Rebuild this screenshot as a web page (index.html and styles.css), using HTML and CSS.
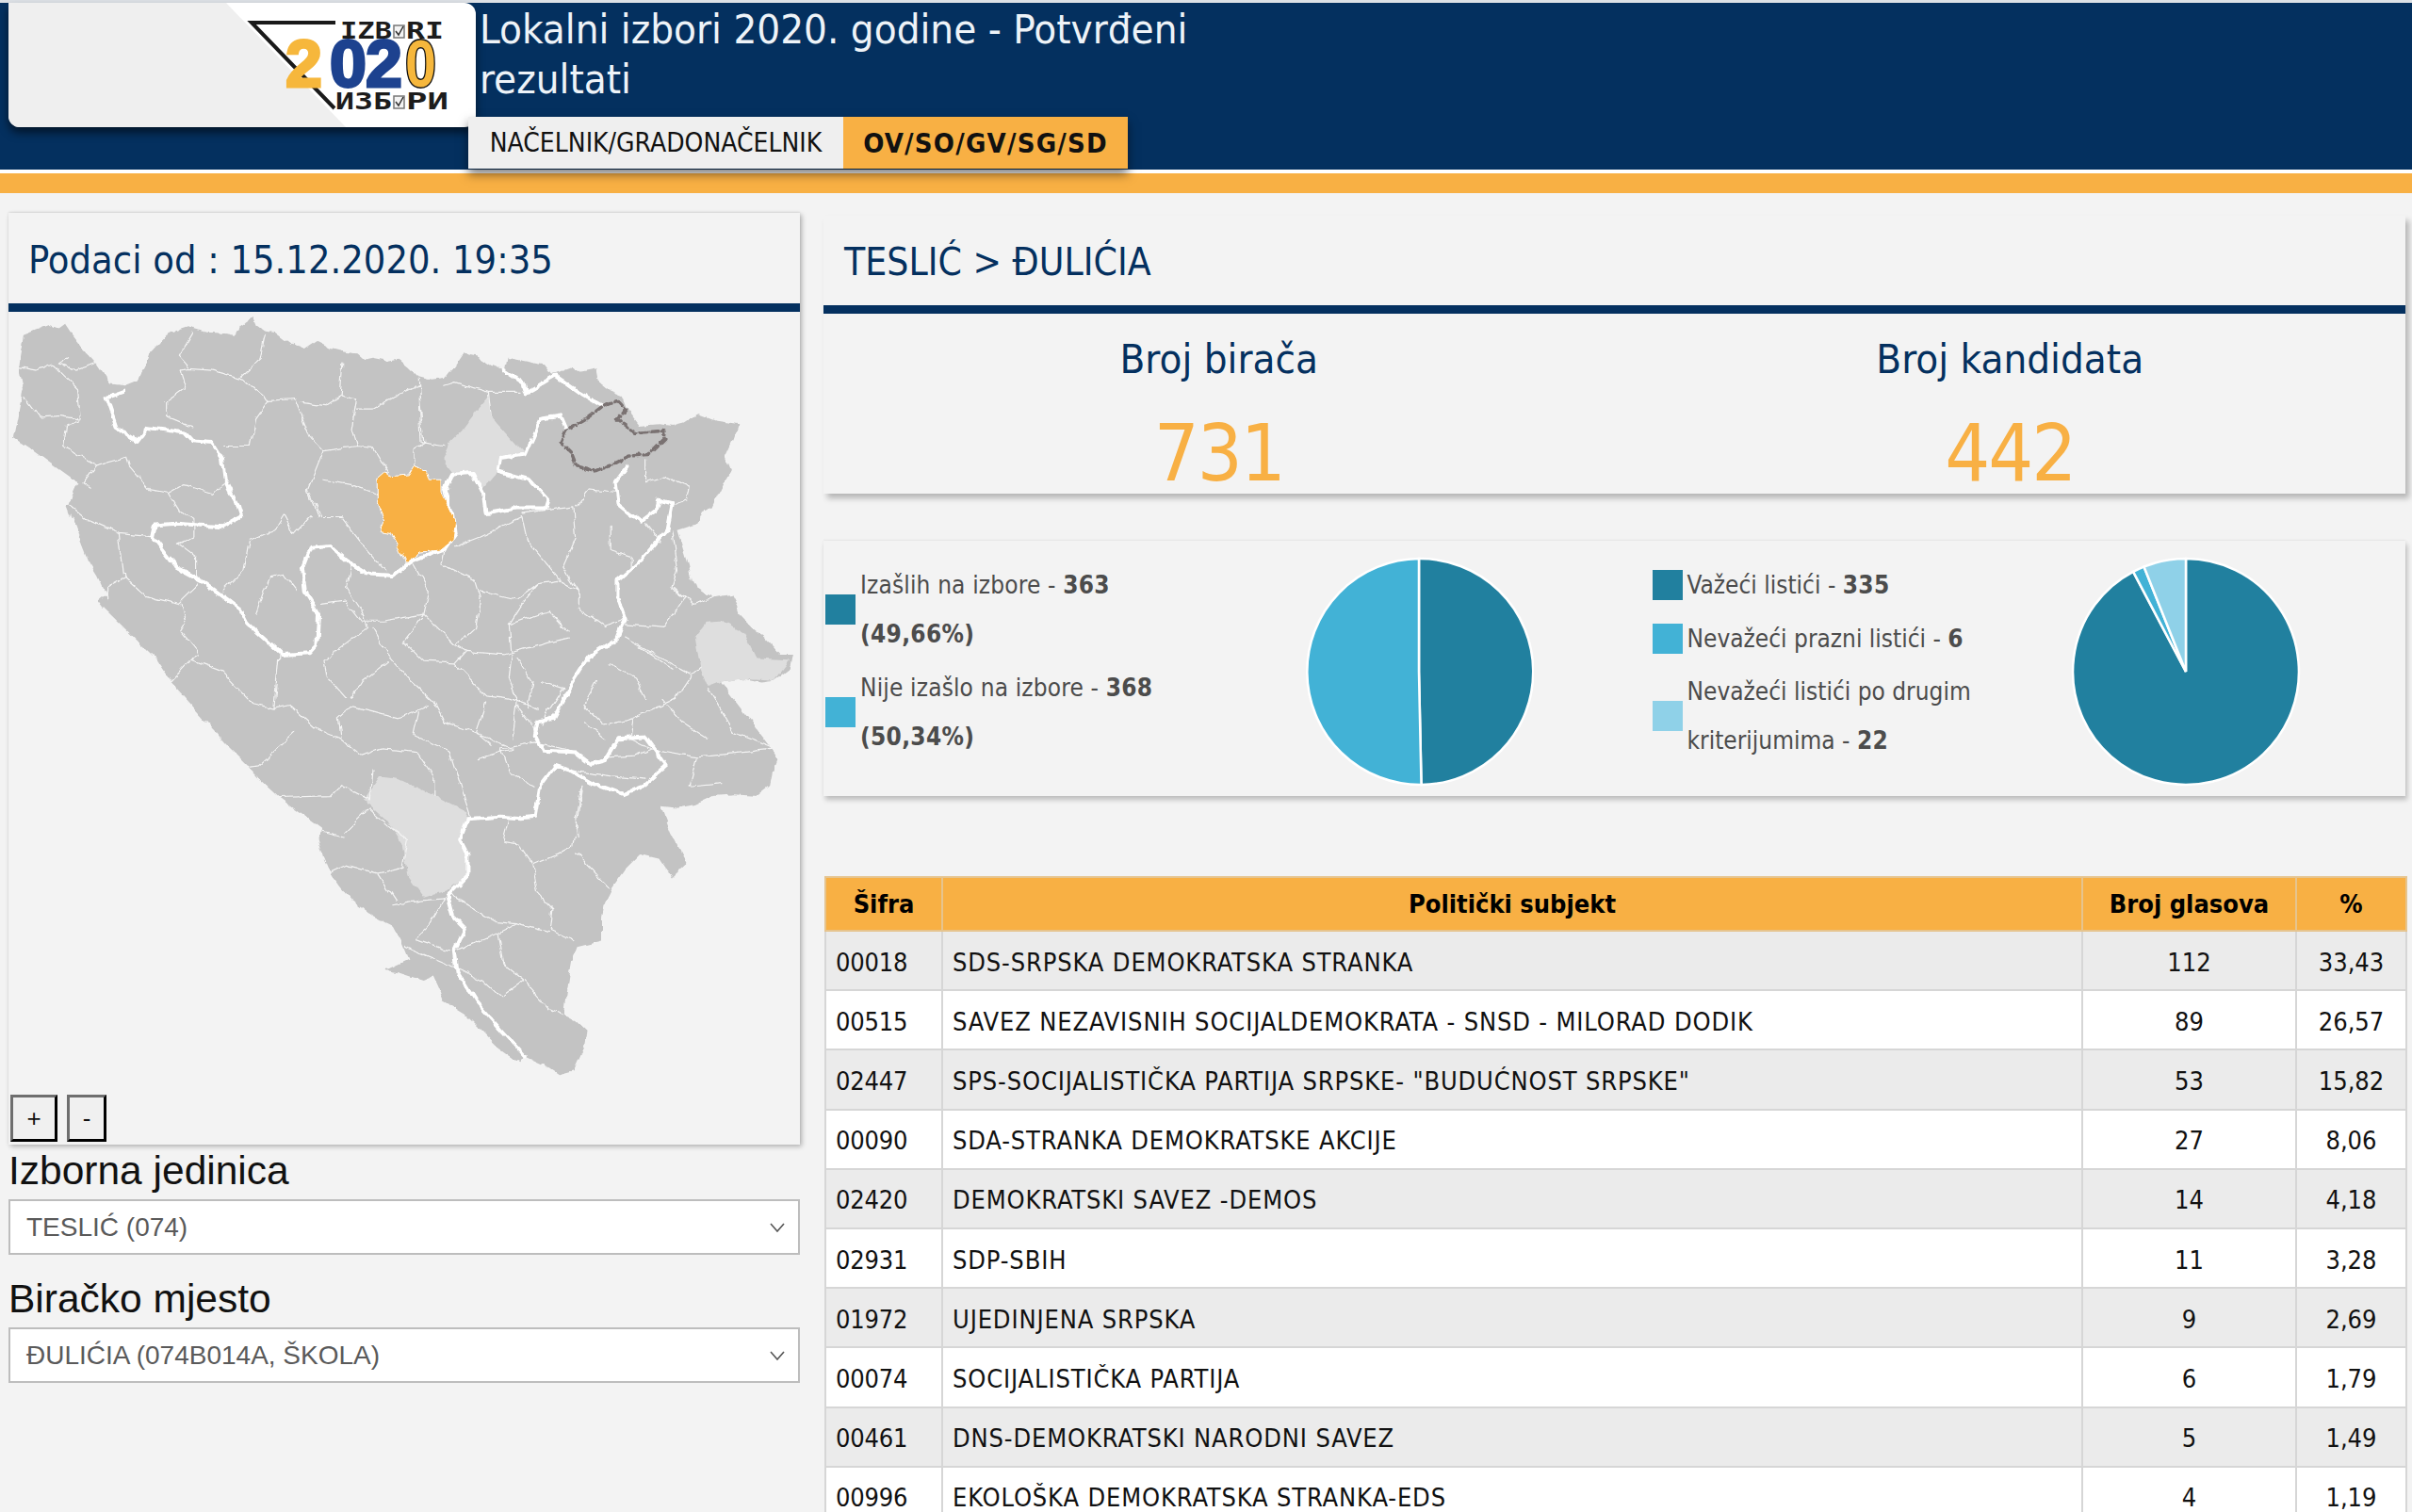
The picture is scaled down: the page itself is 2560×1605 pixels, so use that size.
FILE: index.html
```html
<!DOCTYPE html>
<html lang="bs">
<head>
<meta charset="utf-8">
<title>Lokalni izbori 2020</title>
<link rel="stylesheet" href="styles.css">
</head>
<body>
<header class="topbar">
  <div class="logo-card">
    <svg class="logo" viewBox="9 3 496 132" aria-label="Izbori 2020">
      <polygon class="logo-shade" points="9,3 240,3 367,135 9,135"/>
      <polyline class="logo-tri" points="356,24 267,24 355,115"/>
      <text class="logo-word" x="361" y="41" textLength="55" lengthAdjust="spacingAndGlyphs">IZB</text>
      <rect class="logo-box" x="418" y="27" width="11" height="13"/>
      <polyline class="logo-check" points="420,33 423,37 428,28"/>
      <text class="logo-word" x="431" y="41" textLength="40" lengthAdjust="spacingAndGlyphs">RI</text>
      <text class="logo-num gold" x="303" y="92">2</text>
      <text class="logo-num blue" x="350" y="92">0</text>
      <text class="logo-num blue" x="388" y="92">2</text>
      <text class="logo-num gold outlined" x="430" y="92" textLength="33" lengthAdjust="spacingAndGlyphs">0</text>
      <text class="logo-word" x="356" y="116" textLength="60" lengthAdjust="spacingAndGlyphs">ИЗБ</text>
      <rect class="logo-box" x="418" y="102" width="11" height="13"/>
      <polyline class="logo-check" points="420,108 423,112 428,103"/>
      <text class="logo-word" x="431" y="116" textLength="45" lengthAdjust="spacingAndGlyphs">РИ</text>
    </svg>
  </div>
  <div class="top-right">
    <h1 class="page-title">Lokalni izbori 2020. godine - Potvrđeni rezultati</h1>
    <nav class="tabs">
      <a class="tab">NAČELNIK/GRADONAČELNIK</a>
      <a class="tab tab-active">OV/SO/GV/SG/SD</a>
    </nav>
  </div>
</header>
<div class="stripe"></div>

<main class="layout">
  <aside class="left">
    <section class="map-card">
      <h2 class="card-title left-title">Podaci od : 15.12.2020. 19:35</h2>
      <svg class="map" viewBox="16 31 1532 2475" preserveAspectRatio="none" aria-label="Mapa">
        <defs>
          <filter id="rough" filterUnits="userSpaceOnUse" x="0" y="0" width="1600" height="2600" color-interpolation-filters="sRGB">
            <feTurbulence type="fractalNoise" baseFrequency="0.045 0.02" numOctaves="3" seed="7" result="noise"/>
            <feDisplacementMap in="SourceGraphic" in2="noise" scale="16" xChannelSelector="R" yChannelSelector="G"/>
          </filter>
        </defs>
        <g class="rough">
        <path class="land" d="M45 100L70 85L95 70L112 80L125 65L140 100L160 140L175 165L190 190L205 225L215 245L240 250L265 235L280 195L290 150L305 125L320 100L340 85L360 75L400 92L430 95L455 100L465 70L490 45L497 70L510 85L530 90L560 125L590 140L612 118L640 140L665 150L690 155L705 175L720 170L745 178L770 170L790 195L810 225L835 235L860 230L875 200L895 155L925 165L950 190L975 205L980 165L1015 175L1050 185L1060 205L1070 215L1105 195L1120 210L1155 200L1160 240L1180 265L1205 280L1215 320L1240 370L1275 365L1300 370L1325 360L1350 335L1385 355L1430 365L1420 410L1405 460L1415 500L1395 560L1380 610L1360 625L1350 660L1310 680L1320 730L1330 780L1340 840L1360 860L1380 880L1415 870L1425 900L1430 930L1455 970L1480 1000L1510 1050L1535 1050L1530 1090L1500 1125L1470 1130L1440 1120L1395 1130L1415 1170L1430 1200L1450 1240L1470 1280L1490 1320L1505 1360L1495 1400L1490 1440L1465 1470L1420 1465L1380 1470L1345 1495L1310 1506L1280 1500L1300 1581L1330 1669L1300 1713L1275 1656L1240 1644L1210 1690L1185 1744L1170 1790L1165 1831L1165 1900L1115 1919L1105 1960L1100 2006L1095 2060L1090 2119L1115 2140L1135 2169L1130 2219L1110 2288L1080 2300L1050 2269L1015 2244L1005 2263L960 2213L930 2165L900 2119L860 2081L850 2040L840 2006L820 2019L770 1994L745 1988L790 1956L775 1900L760 1856L720 1825L680 1781L660 1745L640 1706L625 1650L615 1594L625 1569L585 1525L540 1475L505 1425L480 1381L440 1320L400 1250L365 1190L330 1130L315 1095L300 1060L250 985L200 910L190 890L205 870L190 820L170 770L150 690L130 610L150 540L105 490L60 440L25 405L35 330L45 260L35 190L40 145Z"/>
        <path class="region-light" d="M945 285L950 340L985 400L1015 450L970 465L960 510L935 555L915 510L875 510L855 470L870 420L890 390L920 330Z"/>
        <path class="region-light" d="M1345 995L1365 955L1400 950L1440 985L1465 1060L1530 1065L1500 1125L1440 1120L1395 1130L1370 1145L1355 1090Z"/>
        <path class="region-light" d="M735 1413L770 1419L850 1475L905 1519L890 1600L905 1644L905 1706L865 1750L820 1769L790 1706L780 1619L750 1544L705 1481Z"/>
        <path class="thin" d="M35 195L70 205L100 185L130 230L150 260L155 350L130 370L125 430L185 490L160 540L175 555M130 170L115 185L145 205L185 185M45 285L75 345L115 340L150 350M185 490L245 465L250 490L290 560L325 570L355 545L410 570L440 540L455 590M325 570L345 620L375 645L375 700L345 720L380 760L380 825M130 600L170 650L230 690L295 700M230 690L240 820L205 850L205 885M240 820L280 875L345 900L385 840M350 900L360 960L350 985L385 1050L370 1065L330 1130M370 1065L430 1100L480 1180L490 1195L530 1210L540 1040M530 1210L560 1200L610 1270L660 1300L700 1350M570 1280L500 1380L480 1385M660 1300L655 1240L680 1205L720 1220L770 1240L830 1200M700 1350L740 1330L810 1340L840 1410L840 1470M320 300L360 255L350 205L365 200L410 205L470 230L520 295L495 350L485 430L435 430M320 300L320 340L375 375M365 195L345 160L370 95M465 225L505 170L515 95M520 295L570 290L600 405L625 445L595 560L615 640L660 640L680 680L700 720L745 800M580 300L630 310L660 280L665 185M660 280L690 290L680 380L690 430L625 445M690 320L720 320L760 285L810 250L820 420L800 440L800 500M690 430L720 435L750 510M810 230L815 420L860 430M860 250L880 240L945 270L1010 270M945 270L950 340M625 530L680 545L725 570M600 570L620 640M550 630L570 690L600 640M500 700L480 710L470 800L430 860M500 700L530 680L550 630M520 820L495 930M520 820L550 810L575 860M620 900L670 890L700 950L740 950L780 940L820 930L880 1020L900 1040L975 1050M680 780L670 850L700 920L710 970M800 780L830 860L820 930M860 740L855 780L920 830L930 880L920 970L885 1020M930 860L1000 885L1040 840L1080 830L1120 860M880 730L930 700L1010 640L1020 710L1085 830M1010 630L1110 610L1115 700L1090 790L1120 860L1120 910L1170 965L1205 945M1115 610L1140 560L1190 570M1180 670L1180 740L1220 760L1220 800M1250 660L1280 720M1250 470L1250 540L1290 520L1335 550L1330 590L1295 610M1300 680L1310 800L1300 850L1325 880L1285 970L1210 960M1210 1000L1280 1060L1340 1110L1355 1090M1305 850L1340 900L1380 880M1340 1110L1310 1180L1225 1240L1220 1300L1260 1330M1260 1330L1350 1355L1500 1330M1350 1355L1335 1440L1400 1430M710 970L625 1070L630 1110L670 1180M720 970L750 1050L790 1120L840 1190L860 1250L900 1270L990 1330L925 1360M750 1070L700 1130L680 1180M820 930L780 1010L820 1070L880 1075L900 1040M880 1075L940 1170L985 1180L1040 1210M985 960L990 1050L985 1120L1000 1180L990 1300M1100 1000L1020 1030L975 1050M1040 840L1010 900L985 960L1060 920L1100 980M1050 1130L1090 1150L1060 1220M1155 1130L1130 1200L1170 1260L1225 1240M1115 1340L1035 1310L970 1330L985 1400L1030 1440M810 1220L800 1290L870 1340L910 1530M1175 1355L1230 1350L1260 1330M1110 1395L1180 1410L1245 1420M1125 1440L1115 1530L1120 1590M1125 1456L1110 1619L1080 1644L1030 1675L1040 1756L1070 1806L1065 1869L1110 1900M1115 1638L1180 1744M985 1544L975 1606L1005 1613L1030 1669M870 1763L960 1844L1000 1850L1060 1875M880 1931L960 1881L1000 1850M965 1881L975 1969L1015 2019L1065 2106L1085 2119M885 1981L935 2019L970 2069L1015 2019M860 1775L830 1856L805 1894L870 1931M785 1919L880 1981M760 1794L810 1781L860 1775M635 1700L670 1675L730 1700L765 1781M665 1581L715 1506L760 1569L790 1600L780 1681L730 1700M620 1575L665 1594M530 1475L640 1469L660 1438L715 1481L720 1394M1000 1060L1030 1130L1020 1210M1060 1220L1050 1260M1240 1030L1300 1090M1180 1080L1230 1120L1250 1180M1280 1180L1320 1250L1370 1300M1370 1150L1420 1280L1500 1330M1130 1250L1170 1300M1000 1200L1030 1260L1040 1300M940 1190L920 1280L950 1320"/>
        <path class="thick" d="M240 265L205 285L225 375L265 415L285 375L355 390L370 415L410 420L430 470L435 530L455 590L465 640L430 670L340 660L300 665L295 700L340 790L395 835L465 915L480 960L545 1050L600 1045L615 1020L618 930L590 860L585 790L600 730L640 725L680 780L710 810L760 815L800 770L860 735L880 690L875 630L860 560L875 515L915 510L935 570L940 630L1000 615L1055 615L1060 590L1025 530L965 505L970 465L1015 455L1045 350L1085 340L1095 375M1215 490L1190 540L1195 600L1240 655L1270 620L1275 590L1300 600L1290 680L1240 770L1195 830L1195 880L1210 945L1195 1000L1140 1055L1105 1140L1070 1240L1040 1250L1035 1290L1050 1335L1115 1340L1145 1375L1170 1365L1195 1300L1250 1295L1290 1380L1245 1440L1205 1465L1145 1430L1105 1395L1075 1380L1045 1440L1035 1531L1005 1535L970 1531L905 1538L890 1600L905 1644L905 1706L865 1769L875 1825L900 1863L880 1931L885 1994L920 2081L1015 2244M975 205L1015 245L1020 270L1075 220L1120 270L1165 310"/>
        <path class="selected" d="M730 530L745 510L760 520L790 515L800 490L825 505L830 530L855 530L855 570L880 650L875 710L850 740L815 745L785 780L770 730L755 690L735 685L745 650L730 600Z"/>
        <path class="dashed" d="M1195 295L1210 320L1195 350L1230 390L1285 385L1285 410L1255 455L1215 460L1190 480L1150 505L1115 490L1105 450L1085 420L1095 385L1135 350L1170 310Z"/>
        </g>
      </svg>
      <div class="zoom-controls">
        <button class="zoom-btn zoom-plus">+</button>
        <button class="zoom-btn zoom-minus">-</button>
      </div>
    </section>
    <label class="field-label">Izborna jedinica</label>
    <div class="select"><span>TESLIĆ (074)</span><svg class="chevron" viewBox="0 0 16 10"><polyline points="1,1 8,9 15,1"/></svg></div>
    <label class="field-label second">Biračko mjesto</label>
    <div class="select"><span>ĐULIĆIA (074B014A, ŠKOLA)</span><svg class="chevron" viewBox="0 0 16 10"><polyline points="1,1 8,9 15,1"/></svg></div>
  </aside>

  <section class="right">
    <div class="kpi-card">
      <h2 class="card-title right-title">TESLIĆ &gt; ĐULIĆIA</h2>
      <div class="kpis">
        <div class="kpi"><div class="kpi-label">Broj birača</div><div class="kpi-value">731</div></div>
        <div class="kpi"><div class="kpi-label">Broj kandidata</div><div class="kpi-value">442</div></div>
      </div>
    </div>

    <div class="stats">
      <div class="stat-block first">
        <ul class="legend legend-first">
          <li class="legend-item"><i class="swatch dark"></i><div class="legend-text wide"><div class="legend-line">Izašlih na izbore - <b>363</b></div><div class="legend-line"><b>(49,66%)</b></div></div></li>
          <li class="legend-item"><i class="swatch mid"></i><div class="legend-text wide"><div class="legend-line">Nije izašlo na izbore - <b>368</b></div><div class="legend-line"><b>(50,34%)</b></div></div></li>
        </ul>
        <svg class="pie pie-first" viewBox="-120 -120 240 240">
          <path class="slice-dark" d="M0 0L0 -118A118 118 0 0 1 2.5 118Z"/>
          <path class="slice-mid" d="M0 0L2.5 118A118 118 0 1 1 0 -118Z"/>
        </svg>
      </div>
      <div class="stat-block second">
        <ul class="legend legend-second">
          <li class="legend-item"><i class="swatch dark"></i><div class="legend-text"><div class="legend-line">Važeći listići - <b>335</b></div></div></li>
          <li class="legend-item"><i class="swatch mid"></i><div class="legend-text"><div class="legend-line">Nevažeći prazni listići - <b>6</b></div></div></li>
          <li class="legend-item"><i class="swatch pale"></i><div class="legend-text"><div class="legend-line">Nevažeći listići po drugim</div><div class="legend-line">kriterijumima - <b>22</b></div></div></li>
        </ul>
        <svg class="pie pie-second" viewBox="-120 -120 240 240">
          <path class="slice-dark" d="M0 0L0 -118A118 118 0 1 1 -55 -104.4Z"/>
          <path class="slice-mid" d="M0 0L-55 -104.4A118 118 0 0 1 -43.8 -109.6Z"/>
          <path class="slice-pale" d="M0 0L-43.8 -109.6A118 118 0 0 1 0 -118Z"/>
        </svg>
      </div>
    </div>

    <table class="results">
      <colgroup><col class="c-code"><col class="c-name"><col class="c-votes"><col class="c-pct"></colgroup>
      <thead><tr><th>Šifra</th><th>Politički subjekt</th><th>Broj glasova</th><th>%</th></tr></thead>
      <tbody>
        <tr><td class="code">00018</td><td class="name">SDS-SRPSKA DEMOKRATSKA STRANKA</td><td class="num">112</td><td class="num">33,43</td></tr>
        <tr><td class="code">00515</td><td class="name">SAVEZ NEZAVISNIH SOCIJALDEMOKRATA - SNSD - MILORAD DODIK</td><td class="num">89</td><td class="num">26,57</td></tr>
        <tr><td class="code">02447</td><td class="name">SPS-SOCIJALISTIČKA PARTIJA SRPSKE- "BUDUĆNOST SRPSKE"</td><td class="num">53</td><td class="num">15,82</td></tr>
        <tr><td class="code">00090</td><td class="name">SDA-STRANKA DEMOKRATSKE AKCIJE</td><td class="num">27</td><td class="num">8,06</td></tr>
        <tr><td class="code">02420</td><td class="name">DEMOKRATSKI SAVEZ -DEMOS</td><td class="num">14</td><td class="num">4,18</td></tr>
        <tr><td class="code">02931</td><td class="name">SDP-SBIH</td><td class="num">11</td><td class="num">3,28</td></tr>
        <tr><td class="code">01972</td><td class="name">UJEDINJENA SRPSKA</td><td class="num">9</td><td class="num">2,69</td></tr>
        <tr><td class="code">00074</td><td class="name">SOCIJALISTIČKA PARTIJA</td><td class="num">6</td><td class="num">1,79</td></tr>
        <tr><td class="code">00461</td><td class="name">DNS-DEMOKRATSKI NARODNI SAVEZ</td><td class="num">5</td><td class="num">1,49</td></tr>
        <tr><td class="code">00996</td><td class="name">EKOLOŠKA DEMOKRATSKA STRANKA-EDS</td><td class="num">4</td><td class="num">1,19</td></tr>
      </tbody>
    </table>
  </section>
</main>
</body>
</html>
```

FILE: styles.css
```css
* { box-sizing: border-box; }
html, body { margin: 0; padding: 0; }
body {
  height: 1605px;
  overflow: hidden;
  background: #f3f3f3;
  font-family: "DejaVu Sans Condensed", "DejaVu Sans", sans-serif;
  font-stretch: condensed;
  color: #111;
}

/* Header */
.topbar {
  display: flex;
  height: 184px;
  background: #04305f;
  border-top: 3px solid #dde1e6;
  border-bottom: 4px solid #fff;
}
.logo-card {
  flex: none;
  width: 496px;
  height: 132px;
  margin-left: 9px;
  background: #fff;
  border-radius: 0 12px 12px 12px;
  overflow: hidden;
  box-shadow: 0 6px 10px rgba(0, 0, 0, .55);
}
.logo { display: block; width: 496px; height: 132px; }
.logo-shade { fill: #efefef; }
.logo-tri { fill: none; stroke: #1a1a1a; stroke-width: 4; }
.logo-word { font: 700 24px "DejaVu Sans Mono", monospace; fill: #1c1c1c; }
.logo-box { fill: #f4f4f4; stroke: #777; stroke-width: 1.5; }
.logo-check { fill: none; stroke: #333; stroke-width: 1.5; }
.logo-num { font: 700 70px "Liberation Sans", sans-serif; stroke-width: 3; paint-order: stroke; }
.gold { fill: #f6b73c; stroke: #f6b73c; }
.blue { fill: #1d428f; stroke: #1d428f; }
.logo-num.outlined { stroke: #111; stroke-width: 3; }

.top-right { flex: 1; min-width: 0; position: relative; z-index: 2; }
.page-title {
  width: 800px;
  margin: 2px 0 0 4px;
  font-size: 43.5px;
  font-weight: 400;
  line-height: 53px;
  color: #eef3f8;
}
.tabs {
  display: flex;
  width: 700px;
  height: 55px;
  margin: 13px 0 0 -8px;
  box-shadow: 0 6px 10px rgba(0, 0, 0, .5);
}
.tab {
  display: flex;
  align-items: center;
  justify-content: center;
  width: 398px;
  font-size: 28px;
  background: #efefef;
  color: #111;
}
.tab-active { width: 302px; background: #f8b044; font-weight: 700; font-size: 29px; letter-spacing: 1.2px; }
.stripe { height: 21px; background: #f8b044; }

/* Layout */
.layout { display: flex; align-items: flex-start; padding: 21px 0 0 9px; }
.left { flex: none; width: 840px; }
.right { flex: none; width: 1679px; margin: 3px 0 0 25px; }

/* Cards */
.map-card {
  position: relative;
  background: #f3f3f3;
  box-shadow: 2px 2px 5px rgba(0, 0, 0, .28), 0 -1px 2px rgba(0, 0, 0, .08);
}
.card-title {
  margin: 0;
  color: #04305f;
  font-weight: 400;
  border-bottom: 9px solid #04305f;
  display: flex;
  align-items: center;
}
.left-title { height: 105px; padding: 3px 0 0 21px; font-size: 41.2px; }
.right-title { height: 104px; padding: 2px 0 0 22px; font-size: 40.5px; }
.map { display: block; width: 840px; height: 884px; }
.rough { filter: url(#rough); }
.land { fill: #c3c3c3; }
.region-light { fill: #dedede; }
.thin, .thick, .selected, .dashed { vector-effect: non-scaling-stroke; stroke-linejoin: round; stroke-linecap: round; }
.thin { fill: none; stroke: #f4f4f4; stroke-width: 1.2; }
.thick { fill: none; stroke: #fff; stroke-width: 4; }
.selected { fill: #f8b044; stroke: #fff; stroke-width: 1; }
.dashed { fill: none; stroke: #7a7272; stroke-width: 3.5; stroke-dasharray: 7 4; }

.zoom-controls { position: absolute; left: 2px; bottom: 3px; display: flex; gap: 10px; }
.zoom-btn {
  display: flex;
  align-items: center;
  justify-content: center;
  height: 50px;
  padding: 0;
  background: #f0f0f0;
  border: 3px outset #666;
  border-color: #6e6e6e #333 #333 #6e6e6e;
  font: 400 26px "Liberation Sans", sans-serif;
  color: #111;
}
.zoom-plus { width: 50px; }
.zoom-minus { width: 42px; }

.field-label {
  display: block;
  height: 58px;
  padding: 4px 0 0 0;
  font: 400 42.5px/48px "Liberation Sans", sans-serif;
  color: #111;
}
.field-label.second { height: 77px; padding-top: 23px; }
.select {
  display: flex;
  align-items: center;
  justify-content: space-between;
  height: 59px;
  padding: 0 14px 0 17px;
  background: #fff;
  border: 2px solid #bdbdbd;
  font: 400 28px "Liberation Sans", sans-serif;
  color: #5a5a5a;
}
.chevron { width: 16px; height: 10px; }
.chevron polyline { fill: none; stroke: #555; stroke-width: 1.6; }

/* KPI */
.kpi-card { background: #f3f3f3; box-shadow: 4px 5px 6px rgba(0, 0, 0, .25); height: 295px; }
.kpis { display: grid; grid-template-columns: 1fr 1fr; text-align: center; }
.kpi-label { margin-top: 22px; font-size: 43.5px; line-height: 52px; color: #04305f; }
.kpi-value { margin-top: 24px; font-size: 84px; line-height: 100px; letter-spacing: -2px; color: #f8b044; }

/* Stats */
.stats {
  display: flex;
  height: 271px;
  margin-top: 50px;
  padding-top: 21px;
  background: #f3f3f3;
  box-shadow: 2px 4px 5px rgba(0, 0, 0, .22), 0 -1px 2px rgba(0, 0, 0, .06);
}
.stat-block { display: flex; flex: 0 0 50%; }
.stat-block.first { padding-left: 2px; }
.stat-block.second { padding-left: 40px; }
.legend { list-style: none; margin: 0; padding: 0; }
.legend-first { flex: 0 0 513px; }
.legend-second { flex: 0 0 450px; }
.legend-item { display: flex; align-items: center; margin-bottom: 4.5px; }
.swatch { flex: none; width: 32px; height: 32px; margin-right: 4px; }
.legend-second .swatch { margin-right: 5px; }
.dark { background: #21809f; }
.mid { background: #42b2d6; }
.pale { background: #8fd1e8; }
.legend-text { font-size: 26px; line-height: 52px; color: #4c4c4c; }
.legend-text.wide { letter-spacing: .15px; }
.legend-first .legend-text { padding-left: 1px; }
.legend-line { white-space: nowrap; }
.legend-line b { letter-spacing: .3px; }
.pie { flex: none; width: 244px; height: 244px; margin-top: -4px; }
.pie-first { margin-left: -5px; }
.pie-second { margin-left: -6px; }
.pie path { stroke: #fff; stroke-width: 2.5; }
.slice-dark { fill: #21809f; }
.slice-mid { fill: #42b2d6; }
.slice-pale { fill: #8fd1e8; }

/* Table */
.results {
  width: 1678px;
  margin: 85px 0 0 1px;
  table-layout: fixed;
  border-collapse: collapse;
  font-size: 27px;
  color: #111;
}
.c-code { width: 124px; }
.c-name { width: 1210px; }
.c-votes { width: 227px; }
.c-pct { width: 117px; }
.results th, .results td { border: 2px solid #d6d6d6; }
.results th {
  height: 57px;
  background: #f8b044;
  border-color: #e6c48e;
  font-weight: 700;
  text-align: center;
  color: #000;
}
.results td { height: 63.2px; padding: 3px 10px 0; }
.results td.code { letter-spacing: -.2px; }
.results td.name { letter-spacing: .85px; }
.results td.num { text-align: center; padding: 3px 0 0; }
.results tbody tr:nth-child(odd) { background: #ebebeb; }
.results tbody tr:nth-child(even) { background: #fff; }
```
